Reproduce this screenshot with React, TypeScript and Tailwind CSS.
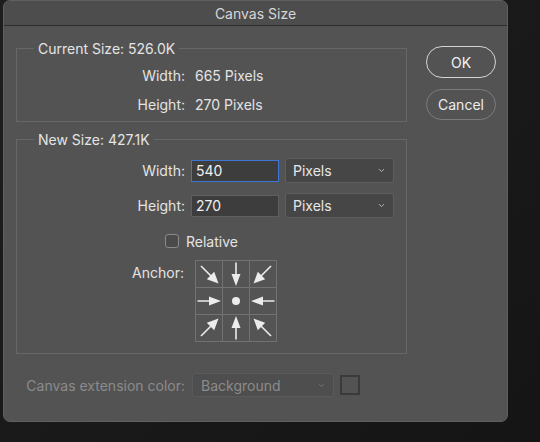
import { ChevronDown } from "lucide-react";

const font = { fontFamily: "Inter, 'Noto Sans', sans-serif" };

function Straight({ rot }: { rot: string }) {
  return (
    <svg viewBox="0 0 26 26" className={`h-[26px] w-[26px] ${rot}`}>
      <line x1="13" y1="1.5" x2="13" y2="15" stroke="#ececec" strokeWidth="1.6" />
      <polygon points="8.5,13 17.5,13 13,25" fill="#ececec" />
    </svg>
  );
}

function Diagonal({ rot }: { rot: string }) {
  return (
    <svg viewBox="0 0 26 26" className={`h-[26px] w-[26px] ${rot}`}>
      <line x1="5" y1="5" x2="16" y2="16" stroke="#ececec" strokeWidth="1.6" />
      <polygon points="18.2,10.8 10.8,18.2 22.5,22.5" fill="#ececec" />
    </svg>
  );
}

function Anchor() {
  const cell = "flex h-[26px] w-[26px] items-center justify-center bg-[#545454]";
  return (
    <div className="grid w-[82px] grid-cols-3 gap-px border border-[#727272] bg-[#727272]">
      <div className={cell}><Diagonal rot="" /></div>
      <div className={cell}><Straight rot="" /></div>
      <div className={cell}><Diagonal rot="rotate-90" /></div>
      <div className={cell}><Straight rot="-rotate-90" /></div>
      <div className={cell}><span className="h-[8px] w-[8px] rounded-full bg-[#ececec]" /></div>
      <div className={cell}><Straight rot="rotate-90" /></div>
      <div className={cell}><Diagonal rot="-rotate-90" /></div>
      <div className={cell}><Straight rot="rotate-180" /></div>
      <div className={cell}><Diagonal rot="rotate-180" /></div>
    </div>
  );
}

function UnitSelect() {
  return (
    <div className="flex h-[25px] w-[109px] items-center justify-between rounded-[3px] border border-[#5e5e5e] bg-[#464646] pl-[7px] pr-[7px] text-[#e6e6e6]">
      <span>Pixels</span>
      <ChevronDown size={9} strokeWidth={2.2} className="text-[#cfcfcf]" />
    </div>
  );
}

export default function App() {
  return (
    <div className="h-[442px] w-[540px] bg-gradient-to-br from-[#1e1e1e] to-[#151515] pl-[3px]" style={font}>
      <div className="flex h-[422px] w-[505px] flex-col overflow-hidden rounded-[7px] border border-[#5f5f5f] bg-[#535353] text-[14px] leading-[17px] text-[#e4e4e4]">
        <div className="flex h-[25px] shrink-0 items-center justify-center border-b border-[#2c2c2c] bg-[#4d4d4d] text-[#d6d6d6]">
          Canvas Size
        </div>

        <div className="flex pl-[12px]">
          <div className="flex w-[391px] flex-col">
            <fieldset className="mt-[14px] border border-[#676767] pb-[7px]">
              <legend className="ml-[17px] px-[4px]">Current Size: 526.0K</legend>
              <div className="mt-[8px] flex h-5 items-center">
                <span className="w-[168px] text-right">Width:</span>
                <span className="ml-[10px]">665 Pixels</span>
              </div>
              <div className="mt-[9px] flex h-5 items-center">
                <span className="w-[168px] text-right">Height:</span>
                <span className="ml-[10px]">270 Pixels</span>
              </div>
            </fieldset>

            <fieldset className="mt-[9px] border border-[#676767] pb-[11px]">
              <legend className="ml-[17px] px-[4px]">New Size: 427.1K</legend>
              <div className="mt-[10px] flex h-[25px] items-center">
                <span className="w-[168px] text-right">Width:</span>
                <div className="ml-[6px] flex h-[22px] w-[88px] items-center border border-[#3b76d6] bg-[#3d3d3d] px-[4px] text-[#f0f0f0]">540</div>
                <div className="ml-[6px]"><UnitSelect /></div>
              </div>
              <div className="mt-[10px] flex h-[25px] items-center">
                <span className="w-[168px] text-right">Height:</span>
                <div className="ml-[6px] flex h-[22px] w-[88px] items-center border border-[#5f5f5f] bg-[#3d3d3d] px-[4px] text-[#f0f0f0]">270</div>
                <div className="ml-[6px]"><UnitSelect /></div>
              </div>
              <div className="mt-[13px] flex h-5 items-center pl-[148px]">
                <span className="h-[14px] w-[14px] rounded-[3px] border border-[#8a8a8a] bg-[#4b4b4b]" />
                <span className="ml-[7px]">Relative</span>
              </div>
              <div className="mt-[9px] flex items-start">
                <span className="w-[167px] pt-[4px] text-right">Anchor:</span>
                <div className="ml-[11px]"><Anchor /></div>
              </div>
            </fieldset>
          </div>

          <div className="ml-[19px] flex flex-col pt-[20px]">
            <button className="h-[32px] w-[70px] rounded-full border border-[#d4d4d4] text-[#f2f2f2]">OK</button>
            <button className="mt-[11px] h-[31px] w-[70px] rounded-full border border-[#7c7c7c] text-[#ececec]">Cancel</button>
          </div>
        </div>

        <div className="mt-[19px] flex items-center pl-[12px] text-[#8b8b8b]">
          <span className="w-[169px] text-right">Canvas extension color:</span>
          <div className="ml-[7px] flex h-[24px] w-[142px] items-center justify-between rounded-[3px] border border-[#5a5a5a] bg-[#4e4e4e] pl-[8px] pr-[7px]">
            <span>Background</span>
            <ChevronDown size={9} strokeWidth={2.2} className="text-[#7a7a7a]" />
          </div>
          <span className="ml-[6px] h-[20px] w-[20px] border-2 border-[#3a3a3a]" />
        </div>
      </div>
    </div>
  );
}
